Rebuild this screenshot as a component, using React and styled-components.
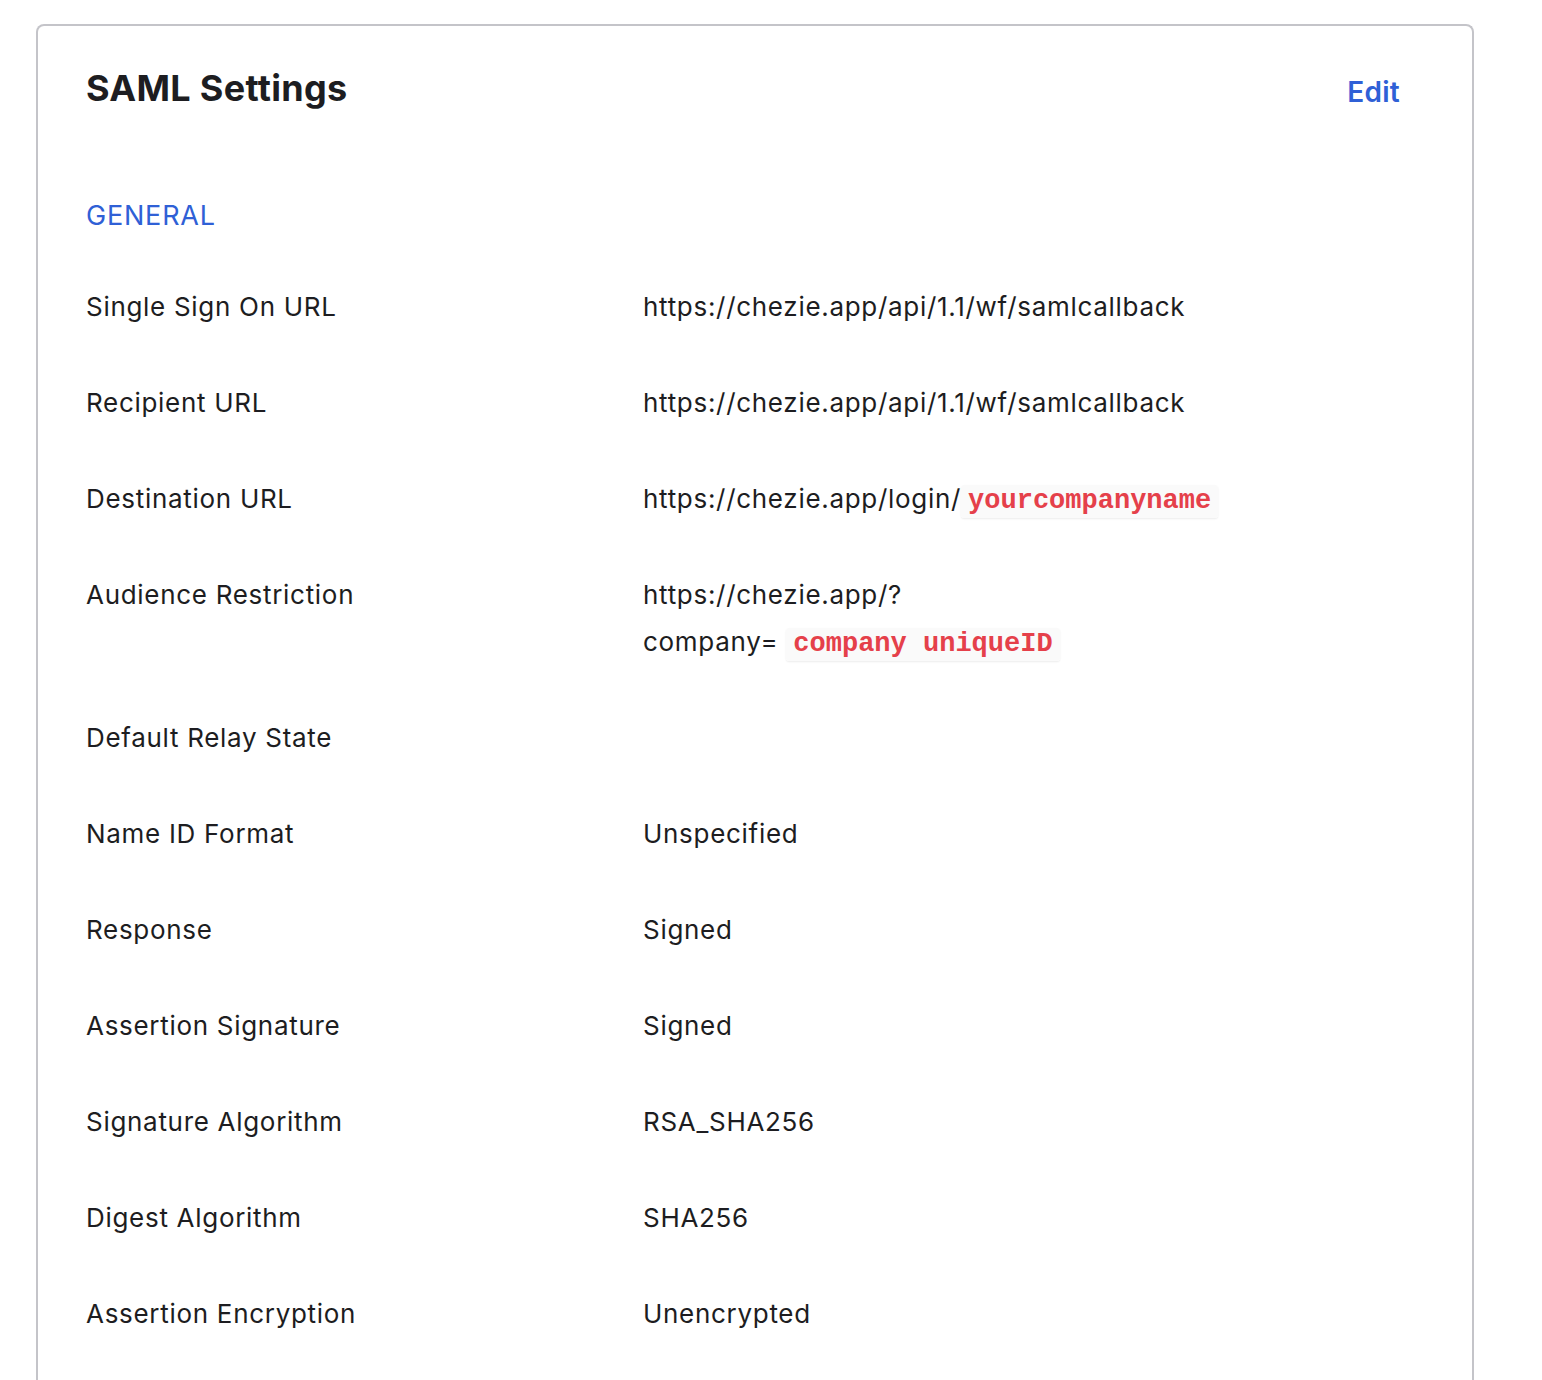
import React from "react";
import styled, { createGlobalStyle } from "styled-components";

const GlobalStyle = createGlobalStyle`
  html, body { margin: 0; padding: 0; background: #ffffff; }
  body { font-family: Inter, "Noto Sans", sans-serif; color: #1d1d21; }
  * { box-sizing: border-box; }
`;

const Page = styled.div`
  padding: 24px 68px 0 36px;
  height: 1380px;
  overflow: hidden;
`;

const Card = styled.section`
  border: 2px solid #c4c4c9;
  border-bottom: none;
  border-radius: 8px 8px 0 0;
  padding: 36px 48px 200px 48px;
  min-height: 1500px;
`;

const Header = styled.div`
  display: flex;
  justify-content: space-between;
  align-items: center;
  padding-right: 24px;
`;

const Title = styled.h2`
  margin: 0;
  font-size: 36px;
  line-height: 44px;
  font-weight: 700;
  letter-spacing: 0.3px;
  color: #1d1d21;
`;

const EditLink = styled.a`
  font-size: 28px;
  line-height: 44px;
  font-weight: 600;
  letter-spacing: 0.3px;
  color: #2f60d6;
  text-decoration: none;
  cursor: pointer;
  margin-top: 8px;
`;

const SectionLabel = styled.h3`
  margin: 86px 0 26px;
  font-size: 27px;
  line-height: 32px;
  font-weight: 400;
  color: #2f60d6;
  letter-spacing: 0.8px;
`;

const Rows = styled.dl`
  margin: 0;
`;

const Row = styled.div`
  display: grid;
  grid-template-columns: 557px 1fr;
  padding: 24.5px 0;
  font-size: 26px;
  line-height: 47px;
  letter-spacing: 0.7px;
`;

const Label = styled.dt`
  margin: 0;
  color: #1d1d21;
`;

const Value = styled.dd`
  margin: 0;
  color: #1d1d21;
`;

const Line = styled.div`
  height: 47px;
`;

const Code = styled.code`
  font-family: "Liberation Mono", "DejaVu Sans Mono", monospace;
  font-size: 27px;
  line-height: 27px;
  font-weight: 700;
  letter-spacing: 0;
  color: #e5404a;
  background: #fafafa;
  padding: 1px 7px 2px;
  border-radius: 3px;
  box-shadow: 0 1px 2px rgba(0, 0, 0, 0.08);
  margin-left: ${(p) => p.$gap || 0}px;
`;

const rows = [
  { label: "Single Sign On URL", value: "https://chezie.app/api/1.1/wf/samlcallback" },
  { label: "Recipient URL", value: "https://chezie.app/api/1.1/wf/samlcallback" },
  {
    label: "Destination URL",
    value: (
      <Line>
        https://chezie.app/login/<Code>yourcompanyname</Code>
      </Line>
    ),
  },
  {
    label: "Audience Restriction",
    value: (
      <>
        <Line>https://chezie.app/?</Line>
        <Line>
          company=<Code $gap={8}>company uniqueID</Code>
        </Line>
      </>
    ),
  },
  { label: "Default Relay State", value: "" },
  { label: "Name ID Format", value: "Unspecified" },
  { label: "Response", value: "Signed" },
  { label: "Assertion Signature", value: "Signed" },
  { label: "Signature Algorithm", value: "RSA_SHA256" },
  { label: "Digest Algorithm", value: "SHA256" },
  { label: "Assertion Encryption", value: "Unencrypted" },
];

export default function App() {
  return (
    <>
      <GlobalStyle />
      <Page>
        <Card>
          <Header>
            <Title>SAML Settings</Title>
            <EditLink>Edit</EditLink>
          </Header>
          <SectionLabel>GENERAL</SectionLabel>
          <Rows>
            {rows.map((r) => (
              <Row key={r.label}>
                <Label>{r.label}</Label>
                <Value>{r.value}</Value>
              </Row>
            ))}
          </Rows>
        </Card>
      </Page>
    </>
  );
}
